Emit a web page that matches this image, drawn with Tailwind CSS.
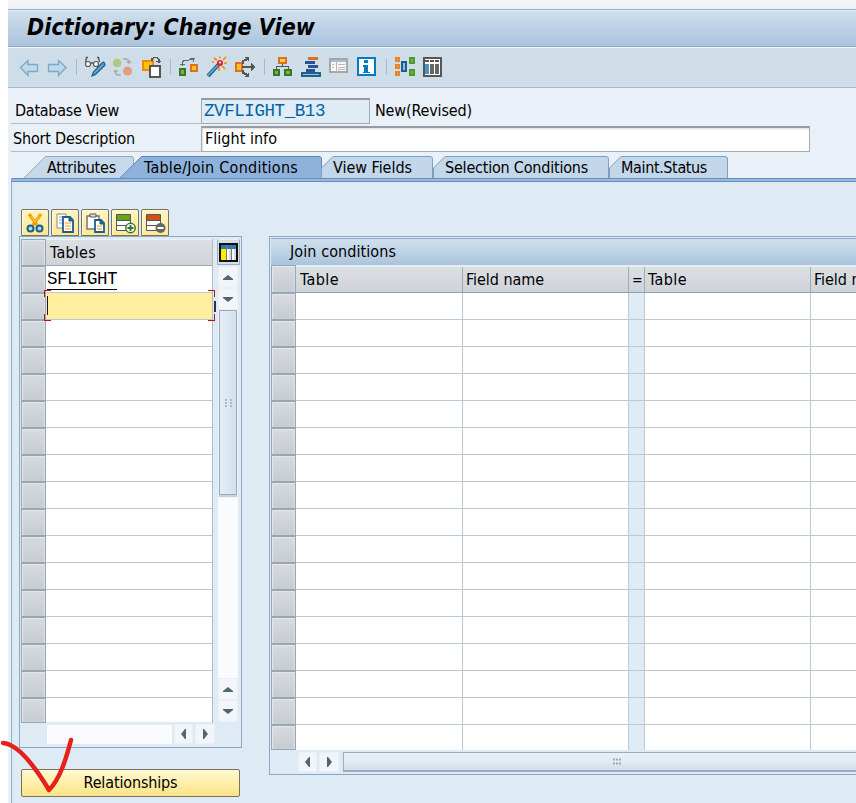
<!DOCTYPE html>
<html lang="en">
<head>
<meta charset="utf-8">
<title>Dictionary: Change View</title>
<script src="https://cdn.jsdelivr.net/npm/@tailwindcss/browser@4"></script>
</head>
<body class="w-[856px] h-[803px] overflow-hidden relative bg-white pl-2 text-[16px] leading-[20px] text-black font-['DejaVu_Sans_Condensed','DejaVu_Sans',sans-serif] [font-stretch:condensed] whitespace-nowrap">
<div class="h-[803px] flex flex-col bg-[#e9f0f7]">
  <div class="h-[10px] shrink-0 bg-gradient-to-b from-[#f5f6fa] to-[#edf1f7] border-b border-[#9aafc7]"></div>
  <header class="h-[37px] shrink-0 pl-[19px] pt-[2px] bg-gradient-to-b from-[#d0e0ed] via-[#bdd1e4] to-[#a9c3dd] border-b border-[#94a9c2] border-t border-t-[#e6eef5]">
    <h1 class="text-[23px] leading-[28px] font-bold italic"><span data-w="288">Dictionary: Change View</span></h1>
  </header>
  <nav class="h-[41px] shrink-0 bg-[#cfdde9] border-t border-t-[#f2f6fa] border-b border-b-[#a5b6c9]">
    <svg width="460" height="39" viewBox="8 48 460 39" shape-rendering="crispEdges">
      <g fill="#bfd9e9" stroke="#78aac9" stroke-width="1.3" shape-rendering="auto">
        <path d="M20.5 67.5 28 60.500V64.500H37.500V71.500H28V75.500Z"/>
        <path d="M66 67.500 58.500 60.500V64.500H48.500V71.500H58.500V75.500Z"/>
      </g>
      <path d="M76.500 59V75M170.500 59V75M264.500 59V75M386.500 59V75" stroke="#9dbbd8"/>
      <g shape-rendering="auto">
        <path d="M88 57.500H86.500L85.500 62M97 57.500H98.500L99.500 62M91 63H93" stroke="#555" fill="none" stroke-width="1.300"/>
        <circle cx="88" cy="64" r="2.500" fill="#fff" stroke="#555" stroke-width="1.200"/><circle cx="96" cy="64" r="2.500" fill="#fff" stroke="#555" stroke-width="1.200"/>
        <path d="M92 76 93.500 72 101 64Q103 61 104.500 63T103 67L95.500 74.500Z" fill="#4f93c4" stroke="#17608f" stroke-width="1.200"/><path d="M94.500 73 102.500 65" stroke="#8bc0e0"/>
      </g>
      <g shape-rendering="auto">
        <circle cx="117" cy="63" r="4.300" fill="#a7cb86"/><circle cx="127.500" cy="71" r="4.500" fill="#e59b7e"/>
        <path d="M123 59H127L129 61V64M126.500 62H131.500M121 75H117L115.500 73V70M113.500 71H118" fill="none" stroke="#aaa" stroke-width="1.500"/>
      </g>
      <path d="M143 60.500H153V69.500H143Z" fill="#ffc20e" stroke="#f08a00" stroke-width="2"/>
      <path d="M152 61V59L154 57.500H157L159 60V63M156 61.500H161" fill="none" stroke="#555" stroke-width="1.500"/>
      <path d="M149.500 65.500H159.500V76.500H149.500Z" fill="#fff" stroke="#555" stroke-width="2"/>
      <path d="M180 69H185V75H180Z" fill="#78b92d" stroke="#37762c" stroke-width="2"/><path d="M191 65H197V71H191Z" fill="#ffc51b" stroke="#e16c25" stroke-width="2"/>
      <path d="M182 66V62L185 60H189L193 59V62M180 64H185M190 58H195" fill="none" stroke="#666" stroke-width="1"/>
      <g shape-rendering="auto"><path d="M208 76 218.500 64.500" stroke="#17608f" stroke-width="4"/><path d="M208 75.500 218 65" stroke="#6fa9cf" stroke-width="1.700"/>
      <path d="M220 58V56.500M214 58 217 60M226 57 223 60M224 63H227M222 66 225 69M219 67V71M214 62H212" stroke="#f58a00" stroke-width="1.600"/><circle cx="220" cy="63" r="3" fill="#e32020"/><circle cx="220" cy="62.500" r="1" fill="#fff"/></g>
      <path d="M236 63H242V71H236Z" fill="#ffc51b" stroke="#e16c25" stroke-width="2"/><path d="M242 67H253M243 64V61L247 59.500M243 70V73L247 74.500" stroke="#555" stroke-width="2" fill="none"/><path d="M251 63 256 67 251 71ZM245 57H249V62ZM245 77H249V72Z" fill="#555"/>
      <path d="M279 58H286V63H279Z" fill="#ffd43b" stroke="#e16c25" stroke-width="2"/><path d="M282.500 64V66M276.500 69V66.500H288.500V69" stroke="#555" fill="none"/><path d="M274 70H279V75H274ZM285 70H291V75H285Z" fill="#78b92d" stroke="#37762c" stroke-width="2"/>
      <path d="M308 57H318V60H308Z" fill="#e16c25"/><path d="M305 61H315V64H305ZM308 65H318V68H308ZM306 69H315V72H306Z" fill="#2a5298"/><path d="M302 73H320V76H302Z" fill="#9dc1dc" stroke="#16638f" stroke-width="1.500"/>
      <path d="M330 59H347V72H330Z" fill="#f7f7f7" stroke="#a6a6a6" stroke-width="2"/><path d="M331 60H346V62H331Z" fill="#a9bdd1"/><path d="M336 62V72" stroke="#b5b5b5"/><path d="M332 64.500H334M332 67.500H334M338 64.500H345M338 67.500H345M338 69.500H345" stroke="#bbb"/>
      <path d="M358 58H375V75H358Z" fill="#fff" stroke="#087ac3" stroke-width="2"/><path d="M364 60H368V63H364ZM363 65H368V72H370V73H363V72H364V67H363Z" fill="#087ac3"/>
      <path d="M396 58H399V61H396ZM396 65H399V68H396ZM396 72H399V75H396Z" fill="#ffd43b" stroke="#e98224" stroke-width="2"/><path d="M402 62H406V71H402Z" fill="#8abbe0" stroke="#17608f" stroke-width="1.500"/><path d="M410 58H414V63H410ZM410 70H414V75H410Z" fill="#78b92d" stroke="#4b9a31" stroke-width="2"/>
      <path d="M424 58H441V76H424Z" fill="#fff" stroke="#555" stroke-width="2"/><path d="M425 60H429V62H425ZM430 60H434V62H430ZM435 60H439V62H435Z" fill="#555"/><path d="M425 64H429V74H425Z" fill="#4f92c4"/><path d="M430 64H434V74H430ZM435 64H439V74H435Z" fill="#666"/>
    </svg>
  </nav>

  <section class="h-[68px] shrink-0 pt-[10px] pl-[3px] flex flex-col gap-[2px]">
    <div class="h-[26px] flex items-stretch">
      <label class="w-[190px] border-b border-[#b8bcc1] pl-1 pt-[3px]"><span data-w="104">Database View</span></label>
      <div class="w-[169px] border border-[#a6abb2] border-t-2 border-t-[#989ca2] bg-[#dfebf5] pl-[2px] pt-px text-[#0064a5] font-['Liberation_Mono',monospace] text-[17.500px]"><span data-w="121">ZVFLIGHT_B13</span></div>
      <div class="pl-[5px] pt-[3px]"><span data-w="97">New(Revised)</span></div>
    </div>
    <div class="h-[26px] flex items-stretch">
      <label class="w-[190px] border-b border-[#b8bcc1] pl-[2px] pt-[3px]"><span data-w="122">Short Description</span></label>
      <div class="w-[609px] border border-[#a6abb2] border-t-2 border-t-[#989ca2] bg-white pl-[3px] pt-px shadow-[inset_1px_1px_2px_#ddd]"><span data-w="72">Flight info</span></div>
    </div>
  </section>

  <div class="h-[22px] shrink-0 flex pl-[15px]">
    <div class="relative w-[111px] h-[22px] pl-[24px] pt-[2px]"><svg class="absolute left-0 top-0" width="111" height="23"><path d="M.500 22.500 22.500.500H108Q110.500.500 110.500 3V22.500" fill="#c6d9ea" stroke="#8faac5"/></svg><span class="relative" data-w="69">Attributes</span></div>
    <div class="relative -ml-[15px] w-[203px] h-[22px] pl-[25px] pt-[2px]"><svg class="absolute left-0 top-0" width="203" height="23"><path d="M.500 22.500 22.500.500H200Q202.500.500 202.500 3V22.500" fill="#8fb2dc" stroke="#5d88b5"/></svg><span class="relative" data-w="154">Table/Join Conditions</span></div>
    <div class="relative -ml-px w-[112px] h-[22px] pl-[12px] pt-[2px]"><svg class="absolute left-0 top-0" width="112" height="23"><path d="M.500 22.500V12L12 .500H109Q111.500.500 111.500 3V22.500" fill="#c2d7e9" stroke="#7f9fc0"/></svg><span class="relative" data-w="79">View Fields</span></div>
    <div class="relative w-[176px] h-[22px] pl-[12px] pt-[2px]"><svg class="absolute left-0 top-0" width="176" height="23"><path d="M.500 22.500V12L12 .500H173Q175.500.500 175.500 3V22.500" fill="#c2d7e9" stroke="#7f9fc0"/></svg><span class="relative" data-w="143">Selection Conditions</span></div>
    <div class="relative w-[119px] h-[22px] pl-[12px] pt-[2px]"><svg class="absolute left-0 top-0" width="119" height="23"><path d="M.500 22.500V12L12 .500H116Q118.500.500 118.500 3V22.500" fill="#c2d7e9" stroke="#7f9fc0"/></svg><span class="relative" data-w="86">Maint.Status</span></div>
  </div>

  <main class="relative ml-[3px] h-[625px] bg-[#deebf5] border-l border-[#8faaca]">
    <div class="-ml-px h-1 bg-[#9bbade] border-y border-[#648db9] rounded-tl-[2px]"></div>
    <div class="flex pl-[7px] pt-[27px]">
      <section class="w-[223px] mr-[27px]">
        <div class="flex gap-[2px] pl-[2px] h-[27px]" id="edit"></div>
        <div class="h-[512px] border border-[#8ba6c6] flex flex-col">
          <div class="flex h-[486px] pt-[2px] pl-px">
            <div class="w-[25px] shrink-0" id="lsel"></div>
            <div class="w-[167px] border-r border-[#aebccb]">
              <div class="h-[27px] bg-gradient-to-b from-[#dce0e4] to-[#cfd3d9] border-b border-[#9ba7b4] border-t border-t-[#eef1f4] pl-1 pt-[3px]"><span data-w="46">Tables</span></div>
              <div id="lrows"></div>
            </div>
            <div class="w-[27px] pl-[4px] flex flex-col">
              <div class="w-[23px] h-[26px] border border-[#a2acb7] border-t-[#eee] bg-[#d9dee3] pl-px pt-[3px]"><svg width="19" height="19" shape-rendering="crispEdges"><path d="M1 1H18V18H1Z" fill="#fff" stroke="#111" stroke-width="2"/><path d="M2 2H17V6H2Z" fill="#287cb8"/><path d="M2 6H7V17H2Z" fill="#ffec00"/><path d="M7.500 2V17M12.500 2V17" stroke="#777"/><path d="M10 6H12V17H10ZM15 6H17V17H15Z" fill="#d4d9de"/></svg></div>
              <div class="w-[20px] mt-px ml-px flex flex-col h-[456px] bg-[#fafbfd]">
                <div class="h-[22px] bg-[#f2f6fa] border border-[#e9eff5] flex items-center justify-center"><svg width="10" height="5"><path d="M0 5V4L5 0 10 4V5Z" fill="#526672"/></svg></div>
                <div class="h-[22px] bg-[#f2f6fa] border border-[#e9eff5] flex items-center justify-center"><svg width="10" height="5"><path d="M0 0V1L5 5 10 1V0Z" fill="#526672"/></svg></div>
                <div class="w-[18px] ml-px h-[185px] bg-gradient-to-r from-[#e6eef5] to-[#d4e1eb] border border-[#96abbf] shadow-[0_2px_1px_#cbd1d6] flex items-center justify-center"><svg width="7" height="8"><path d="M0 1H2M5 1H7M0 4H2M5 4H7M0 7H2M5 7H7" stroke="#9baab8" stroke-width="1.500"/></svg></div>
                <div class="flex-1"></div>
                <div class="h-[22px] bg-[#f2f6fa] border border-[#e9eff5] flex items-center justify-center"><svg width="10" height="5"><path d="M0 5V4L5 0 10 4V5Z" fill="#526672"/></svg></div>
                <div class="h-[22px] bg-[#f2f6fa] border border-[#e9eff5] flex items-center justify-center"><svg width="10" height="5"><path d="M0 0V1L5 5 10 1V0Z" fill="#526672"/></svg></div>
              </div>
            </div>
          </div>
          <div class="flex pl-[27px] pt-px gap-[2px]">
            <div class="w-[125px] h-[19px] mt-px bg-[#fafbfd]"></div>
            <div class="w-[19px] h-[20px] bg-[#f2f6fa] border border-[#e9eff5] flex items-center justify-center"><svg width="5" height="10"><path d="M5 0H4L0 5 4 10H5Z" fill="#526672"/></svg></div>
            <div class="w-[20px] h-[20px] bg-[#f2f6fa] border border-[#e9eff5] flex items-center justify-center"><svg width="5" height="10"><path d="M0 0H1L5 5 1 10H0Z" fill="#526672"/></svg></div>
          </div>
        </div>
        <button class="block ml-[2px] mt-[21px] w-[219px] h-[28px] rounded-[2px] border border-[#77735f] bg-gradient-to-b from-[#fff9d5] via-[#ffefa9] to-[#f9e287] shadow-[inset_0_1px_#fff9d8] text-center"><span data-w="94">Relationships</span></button>
      </section>
      <section class="w-[587px] shrink-0 mt-[27px] h-[539px] border border-r-0 border-[#8ba6c6] pl-px pt-px">
        <div class="h-[27px] border-t border-[#8ba6c6] bg-gradient-to-b from-[#d1e0ed] to-[#abc4dd] pl-[19px] pt-[3px]"><span data-w="106">Join conditions</span></div>
        <div class="flex h-[485px]">
          <div class="w-[25px] shrink-0" id="rsel"></div>
          <div class="flex-1 overflow-hidden">
            <div class="h-[28px] grid grid-cols-[167px_166px_16px_166px_166px] bg-gradient-to-b from-[#dce0e4] to-[#ced3da] border-b border-[#929fad] border-t-2 border-t-[#e6ebef]">
              <div class="border-r border-[#a0abb7] pl-1 pt-[3px]"><span data-w="39">Table</span></div>
              <div class="border-r border-[#a0abb7] pl-[3px] pt-[3px]"><span data-w="78">Field name</span></div>
              <div class="border-r border-[#a0abb7] pl-[3px] pt-[3px]"><span data-w="10" class="text-[14px]">=</span></div>
              <div class="border-r border-[#a0abb7] pl-[3px] pt-[3px]"><span data-w="39">Table</span></div>
              <div class="pl-[3px] pt-[3px]"><span data-w="78">Field name</span></div>
            </div>
            <div id="rrows"></div>
          </div>
        </div>
        <div class="flex pl-[27px] pt-[2px]">
          <div class="w-[19px] h-[20px] mr-[2px] bg-[#f2f6fa] border border-[#e9eff5] flex items-center justify-center"><svg width="5" height="10"><path d="M5 0H4L0 5 4 10H5Z" fill="#526672"/></svg></div>
          <div class="w-[20px] h-[20px] mr-[4px] bg-[#f2f6fa] border border-[#e9eff5] flex items-center justify-center"><svg width="5" height="10"><path d="M0 0H1L5 5 1 10H0Z" fill="#526672"/></svg></div>
          <div class="flex-1 h-[20px] border border-r-0 border-b-2 border-[#9baebd] bg-gradient-to-b from-[#e8eff5] via-[#e3ecf4] to-[#d0dde6] pl-[269px] pt-[5px]"><svg class="block" width="9" height="7"><path d="M0 1.500H2M3 1.500H5M6 1.500H8M0 5.500H2M3 5.500H5M6 5.500H8" stroke="#9baab8" stroke-width="2"/></svg></div>
        </div>
      </section>
    </div>
  </main>
</div>

<!-- focus corners of the active cell -->
<svg class="absolute left-[44px] top-[290px]" width="173" height="32" shape-rendering="crispEdges"><path d="M.500 7V.500H7M164 .500H170.500V7M.500 24V30.500H7M164 30.500H170.500V24" fill="none" stroke="#b41616"/><path d="M3.500 6V25" stroke="#101060"/><path d="M171 11V22" stroke="#333" stroke-width="2"/></svg>
<!-- hand-drawn check mark -->
<svg class="absolute left-0 top-[730px]" width="85" height="73"><path d="M3 13C19 14 37 40 49 60C60 49 66 29 71 10" fill="none" stroke="#e6201c" stroke-width="4.500" stroke-linecap="round" stroke-linejoin="round"/></svg>

<script>
const cell = h => `<div class="w-[25px] border border-[#9aa6b2] bg-gradient-to-b from-[#d7dbe0] to-[#c6ccd3] shadow-[inset_1px_1px_1px_#e5e8eb,inset_-1px_0_1px_#dde0e4]" style="height:${h}px"></div>`;
const repeat = (n, f) => Array.from({length: n}, (_, i) => f(i)).join('');
const el = id => document.getElementById(id);
el('lsel').innerHTML = repeat(18, i => cell(i === 17 ? 25 : 27));
el('rsel').innerHTML = cell(28) + repeat(17, i => cell(i === 16 ? 25 : 27));
el('lrows').innerHTML = repeat(17, i => i === 0
  ? `<div class="h-[27px] bg-white border-b border-[#bbc8d7] pl-px pt-[3px] font-['Liberation_Mono',monospace] text-[17.500px]"><span class="inline-block h-[20px] leading-[19px] border-b border-black" data-w="70">SFLIGHT</span></div>`
  : i === 1 ? `<div class="h-[27px] bg-[#ffef9f] border-b border-[#bbc8d7]"></div>`
  : i === 16 ? `<div class="h-[24px] bg-white"></div>`
  : `<div class="h-[27px] bg-white border-b border-[#bbc8d7]"></div>`);
el('rrows').innerHTML = repeat(17, i => `<div class="grid grid-cols-[167px_166px_16px_166px_166px] bg-white border-[#bbc8d7]" style="height:${i === 16 ? 25 : 27}px;border-bottom-width:${i === 16 ? 0 : 1}px"><div class="border-r border-[#bbc8d7]"></div><div class="border-r border-[#bbc8d7]"></div><div class="border-r border-[#bbc8d7] bg-[#dfebf5]"></div><div class="border-r border-[#bbc8d7]"></div></div>`);
const icons = [
 '<path d="M6 3 14 14M18 3 10 14" stroke="#ff9d00" stroke-width="3"/><path d="M8 5 12 11 16 5" fill="none" stroke="#ffc849"/><circle cx="7.500" cy="17.500" r="3" fill="#b5d6e9" stroke="#17608f" stroke-width="2"/><circle cx="16.500" cy="17.500" r="3" fill="#b5d6e9" stroke="#17608f" stroke-width="2"/>',
 '<path d="M4 3H13V17H4Z" fill="#fff" stroke="#888"/><path d="M6 6H10M6 9H10M6 12H10" stroke="#999"/><path d="M10 6H17L20 9V21H10Z" fill="#fff" stroke="#17608f" stroke-width="1.800"/><path d="M16 6V10H20" fill="#16608f" stroke="#16608f"/><path d="M12 12H18M12 15H18M12 18H18" stroke="#ef9d13"/>',
 '<path d="M4 5H16V18H4Z" fill="#fff" stroke="#777" stroke-width="1.500"/><path d="M7 6V3H13V6Z" fill="#ddd" stroke="#555"/><path d="M12 9H18L21 12V21H12Z" fill="#fff" stroke="#17608f" stroke-width="1.800"/><path d="M17 9V13H21" fill="#16608f" stroke="#16608f"/><path d="M14 15H19M14 18H19" stroke="#ef9d13"/>',
 '<path d="M3.500 3.500H17.500V19.500H3.500Z" fill="#fff" stroke="#555"/><path d="M4 4H17V9H4Z" fill="#65a517"/><path d="M4 9.500H17M4 14.500H14" stroke="#555"/><circle cx="17.500" cy="17" r="4.700" fill="#fff" stroke="#37762c" stroke-width="1.500"/><path d="M14.500 17H20.500M17.500 14V20" stroke="#37762c" stroke-width="2"/>',
 '<path d="M3.500 3.500H17.500V19.500H3.500Z" fill="#fff" stroke="#555"/><path d="M4 4H17V9H4Z" fill="#d94e13"/><path d="M4 9.500H17M4 14.500H14" stroke="#555"/><circle cx="17.500" cy="17" r="5" fill="#666"/><path d="M14.500 17H20.500" stroke="#fff" stroke-width="2"/>'];
el('edit').innerHTML = icons.map(p => `<div class="w-[28px] h-[27px] rounded-t-[2px] border border-[#77735f] bg-gradient-to-b from-[#fff5c5] to-[#ffe891] shadow-[inset_1px_1px_#fffbdc] pl-px pt-px"><svg width="24" height="24" viewBox="0 0 24 24">${p}</svg></div>`).join('');
const labels = [...document.querySelectorAll('[data-w]')];
const fit = s => {
  const n = s.textContent.length, gap = +s.dataset.w - s.getBoundingClientRect().width;
  if (Math.abs(gap) > 0.3) s.style.letterSpacing = ((parseFloat(s.style.letterSpacing) || 0) + gap / n) + 'px';
};
labels.forEach(s => { s.style.display = 'inline-block'; });
const watcher = new ResizeObserver(entries => entries.forEach(e => fit(e.target)));
labels.forEach(s => watcher.observe(s));
addEventListener('load', () => labels.forEach(fit));
document.fonts.ready.then(() => labels.forEach(fit));
</script>
</body>
</html>
